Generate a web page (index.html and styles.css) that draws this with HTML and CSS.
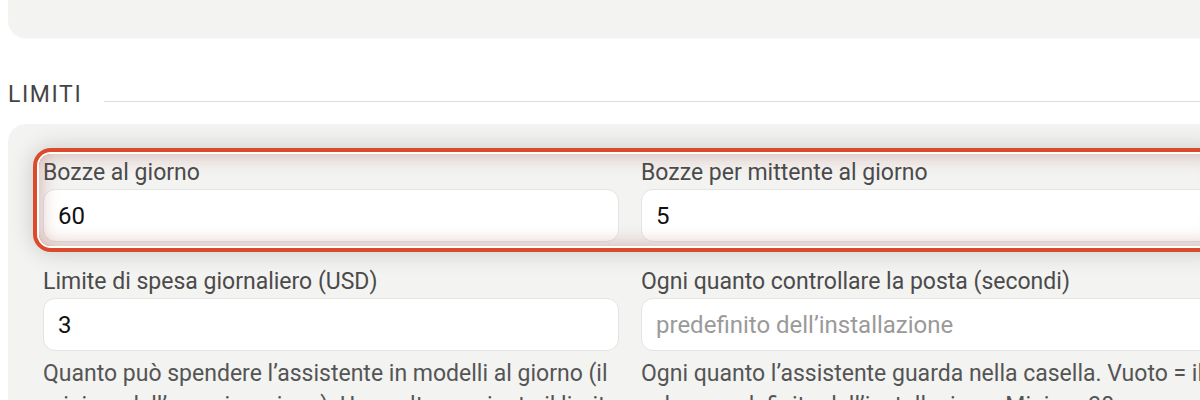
FILE: index.html
```html
<!DOCTYPE html>
<html lang="it">
<head>
<meta charset="utf-8">
<title>Limiti</title>
<link rel="stylesheet" href="styles.css">
</head>
<body>
<div class="page">
  <div class="card card-top"></div>

  <div class="section-head">
    <span class="section-title">LIMITI</span>
    <span class="rule"></span>
  </div>

  <div class="card card-limits">
    <div class="grid">
      <div class="field">
        <label class="label">Bozze al giorno</label>
        <input class="input" type="text" value="60">
      </div>
      <div class="field">
        <label class="label">Bozze per mittente al giorno</label>
        <input class="input" type="text" value="5">
      </div>
      <div class="highlight"></div>
      <div class="field">
        <label class="label">Limite di spesa giornaliero (USD)</label>
        <input class="input" type="text" value="3">
        <p class="help">Quanto può spendere l’assistente in modelli al giorno (il minimo dell’organizzazione). Una volta raggiunto il limite</p>
      </div>
      <div class="field">
        <label class="label">Ogni quanto controllare la posta (secondi)</label>
        <input class="input" type="text" placeholder="predefinito dell’installazione">
        <p class="help">Ogni quanto l’assistente guarda nella casella. Vuoto = il valore predefinito dell’installazione. Minimo 30.</p>
      </div>
    </div>
  </div>
</div>
</body>
</html>
```

FILE: styles.css
```css
html, body {
  margin: 0;
  padding: 0;
  background: #ffffff;
  overflow: hidden;
}

body {
  font-family: Roboto, "Liberation Sans", Arial, sans-serif;
  color: #4a4a4a;
}

.page {
  width: 1260px;
  padding-left: 8px;
  box-sizing: border-box;
}

.card {
  background: #f3f3f1;
  border-radius: 18px;
}

.card-top {
  height: 120px;
  margin-top: -82px;
  box-shadow: 0 1px 1px rgba(0, 0, 0, 0.03);
}

.section-head {
  display: flex;
  align-items: flex-end;
  margin-top: 43px;
  height: 28px;
}

.section-title {
  font-size: 23px;
  line-height: 28px;
  letter-spacing: 1.6px;
  color: #444444;
}

.rule {
  flex: 1;
  height: 0;
  border-bottom: 1px solid #dcdcdc;
  margin-left: 22px;
  margin-bottom: 7px;
}

.card-limits {
  margin-top: 15px;
  padding: 35px 35px 40px 35px;
}

.grid {
  position: relative;
  display: grid;
  grid-template-columns: 576px 576px;
  column-gap: 22px;
  row-gap: 26px;
}

.field {
  display: flex;
  flex-direction: column;
  min-width: 0;
}

.label {
  font-size: 23px;
  line-height: 28px;
  color: #4b4b4b;
  margin-bottom: 2px;
}

.input {
  height: 53px;
  box-sizing: border-box;
  border: 1px solid #e4e4e2;
  border-radius: 12px;
  background: #ffffff;
  padding: 0 14px;
  font-family: Roboto, "Liberation Sans", Arial, sans-serif;
  font-size: 24px;
  color: #111111;
  outline: none;
}

.input::placeholder {
  color: #9a9a9a;
}

.help {
  margin: 7px 0 0 0;
  font-size: 23px;
  line-height: 32px;
  color: #555555;
}

.highlight {
  position: absolute;
  grid-column: 1 / 3;
  grid-row: 1 / 2;
  top: -5px;
  left: -4px;
  right: -4px;
  bottom: -4px;
  border-radius: 12px;
  pointer-events: none;
  box-shadow:
    inset 0 0 20px rgba(150, 60, 50, 0.38),
    0 0 0 2px #ffffff,
    0 0 0 6px #db4a2b,
    0 0 22px 7px rgba(0, 0, 0, 0.16);
}
```
